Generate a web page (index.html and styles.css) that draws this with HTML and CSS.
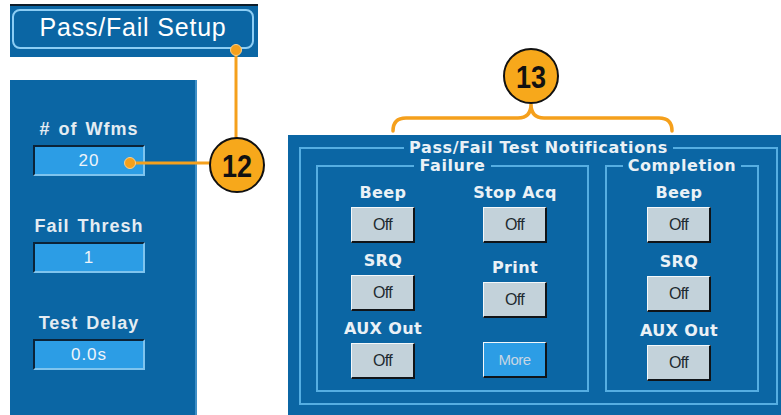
FILE: index.html
```html
<!DOCTYPE html>
<html lang="en">
<head>
    <meta charset="UTF-8">
    <title>Pass/Fail Setup</title>
    <link rel="stylesheet" href="styles.css">
</head>
<body>
    <div class="page">
        <!-- Left: setup menu and parameter column -->
        <div class="setup">
            <div class="titlebar">
                <div class="title-frame">Pass/Fail Setup</div>
            </div>
            <div class="side">
                <div class="param">
                    <div class="param-label"># of Wfms</div>
                    <div class="param-field">20</div>
                </div>
                <div class="param">
                    <div class="param-label">Fail Thresh</div>
                    <div class="param-field">1</div>
                </div>
                <div class="param">
                    <div class="param-label">Test Delay</div>
                    <div class="param-field">0.0s</div>
                </div>
            </div>
        </div>

        <!-- Right: notification options -->
        <div class="notify">
            <fieldset class="outer">
                <legend>Pass/Fail Test Notifications</legend>
                <div class="groups">
                    <fieldset class="group failure">
                        <legend>Failure</legend>
                        <div class="cols">
                            <div class="col col-a">
                                <div class="opt"><span class="opt-label">Beep</span><button class="btn">Off</button></div>
                                <div class="opt"><span class="opt-label">SRQ</span><button class="btn">Off</button></div>
                                <div class="opt"><span class="opt-label">AUX Out</span><button class="btn">Off</button></div>
                            </div>
                            <div class="col col-b">
                                <div class="opt"><span class="opt-label">Stop Acq</span><button class="btn">Off</button></div>
                                <div class="opt"><span class="opt-label">Print</span><button class="btn">Off</button></div>
                                <div class="opt opt-more"><button class="btn btn-more">More</button></div>
                            </div>
                        </div>
                    </fieldset>
                    <fieldset class="group completion">
                        <legend>Completion</legend>
                        <div class="cols">
                            <div class="col col-c">
                                <div class="opt"><span class="opt-label">Beep</span><button class="btn">Off</button></div>
                                <div class="opt"><span class="opt-label">SRQ</span><button class="btn">Off</button></div>
                                <div class="opt"><span class="opt-label">AUX Out</span><button class="btn">Off</button></div>
                            </div>
                        </div>
                    </fieldset>
                </div>
            </fieldset>
        </div>

        <!-- Callout lines and numbered markers -->
        <svg class="callouts" width="781" height="415" viewBox="0 0 781 415">
            <line x1="236" y1="50" x2="236" y2="140" class="lead"/>
            <circle cx="236" cy="50" r="5.5" class="dot"/>
            <line x1="130" y1="163" x2="212" y2="163" class="lead"/>
            <circle cx="130" cy="163" r="5.5" class="dot"/>
            <circle cx="237" cy="165" r="27" class="marker"/>
            <text x="237" y="177" class="marker-num" textLength="30" lengthAdjust="spacingAndGlyphs">12</text>

            <path d="M393,131 Q393,118 406,118 L518,118 Q531,118 531,104 Q531,118 544,118 L659,118 Q672,118 672,131" class="brace"/>
            <circle cx="531" cy="76" r="27" class="marker"/>
            <text x="531" y="88" class="marker-num" textLength="30" lengthAdjust="spacingAndGlyphs">13</text>
        </svg>
    </div>
</body>
</html>
```

FILE: styles.css
```css
* {
    box-sizing: border-box;
}

body {
    margin: 0;
    background-color: #fff;
}

.page {
    position: relative;
    width: 781px;
    height: 415px;
    display: flex;
    overflow: hidden;
}

/* Left column */
.setup {
    width: 248px;
    margin-left: 10px;
    display: flex;
    flex-direction: column;
}

.titlebar {
    height: 53px;
    margin-top: 4px;
    border-top: 2px solid #0d1d2b;
    padding: 3px 4px 8px 2px;
    background-color: #0b66a4;
}

.title-frame {
    height: 100%;
    border: 2px solid #8ccdf4;
    border-radius: 8px;
    display: flex;
    align-items: center;
    justify-content: center;
    padding-bottom: 3px;
    font-family: "Liberation Sans", Arial, sans-serif;
    font-size: 25px;
    letter-spacing: 0.8px;
    color: #fff;
}

.side {
    flex: 1;
    width: 187px;
    margin-top: 23px;
    padding: 39px 0 0 23px;
    background-color: #0b66a4;
    border-right: 2px solid #3f8fc6;
    display: flex;
    flex-direction: column;
    gap: 40px;
}

.param {
    width: 112px;
    display: flex;
    flex-direction: column;
    gap: 6px;
}

.param-label {
    font-family: "Liberation Sans", Arial, sans-serif;
    font-weight: bold;
    font-size: 18px;
    line-height: 20px;
    letter-spacing: 1px;
    word-spacing: 2px;
    text-align: center;
    white-space: nowrap;
    color: #e4ecf2;
}

.param-field {
    height: 31px;
    background-color: #2c9de5;
    border-top: 2px solid #0b2338;
    border-left: 2px solid #0b2338;
    border-right: 2px solid #7fc4ee;
    border-bottom: 2px solid #7fc4ee;
    display: flex;
    align-items: center;
    justify-content: center;
    font-family: "Liberation Sans", Arial, sans-serif;
    font-size: 17px;
    letter-spacing: 1px;
    color: #eef4fa;
}

/* Right panel */
.notify {
    flex: 1;
    margin: 135px 0 0 30px;
    padding: 4px 3px 10px 11px;
    background-color: #0b66a4;
    display: flex;
    flex-direction: column;
}

.notify fieldset {
    margin: 0;
    border: 2px solid #55aee2;
    min-width: 0;
}

.notify legend {
    margin: 0 auto;
    padding: 0 5px;
    font-family: "DejaVu Sans", Verdana, sans-serif;
    font-weight: bold;
    font-size: 16px;
    line-height: 18px;
    letter-spacing: 0.6px;
    color: #eaf1f6;
}

.outer {
    flex: 1;
    padding: 0 15px 11px 15px;
    display: flex;
    flex-direction: column;
}

.groups {
    flex: 1;
    display: flex;
    gap: 16px;
}

.group {
    padding: 9px 0 0 0;
}

.failure {
    width: 273px;
}

.completion {
    width: 154px;
}

.cols {
    display: flex;
    gap: 68px;
    padding-left: 33px;
}

.completion .cols {
    padding-left: 40px;
}

.col {
    width: 64px;
    display: flex;
    flex-direction: column;
    align-items: center;
}

.col-a {
    gap: 9px;
}

.col-b {
    gap: 16px;
}

.col-c {
    gap: 10px;
}

.opt {
    display: flex;
    flex-direction: column;
    align-items: center;
    gap: 5px;
}

.opt-more {
    margin-top: 8px;
}

.opt-label {
    font-family: "DejaVu Sans", Verdana, sans-serif;
    font-weight: bold;
    font-size: 16px;
    line-height: 18px;
    letter-spacing: 0.4px;
    white-space: nowrap;
    color: #eaf1f6;
}

.btn {
    width: 64px;
    height: 36px;
    padding: 0;
    background-color: #c3d2da;
    border-top: 1px solid #f4f8fa;
    border-left: 1px solid #f4f8fa;
    border-right: 2px solid #101418;
    border-bottom: 2px solid #101418;
    border-radius: 0;
    font-family: "Liberation Sans", Arial, sans-serif;
    font-size: 16px;
    letter-spacing: -0.6px;
    color: #1e2a30;
}

.btn-more {
    background-color: #2c9de5;
    font-size: 15px;
    color: #c6d6e4;
}

/* Callouts */
.callouts {
    position: absolute;
    top: 0;
    left: 0;
    pointer-events: none;
}

.lead {
    stroke: #f5a01c;
    stroke-width: 3;
}

.dot {
    fill: #f5a01c;
    stroke: #fbd08a;
    stroke-width: 1;
}

.brace {
    fill: none;
    stroke: #f5a01c;
    stroke-width: 3.5;
    stroke-linecap: round;
}

.marker {
    fill: #f7a81b;
    stroke: #111;
    stroke-width: 2;
}

.marker-num {
    font-family: "Liberation Sans", Arial, sans-serif;
    font-weight: bold;
    font-size: 32px;
    text-anchor: middle;
    fill: #111;
}
```
